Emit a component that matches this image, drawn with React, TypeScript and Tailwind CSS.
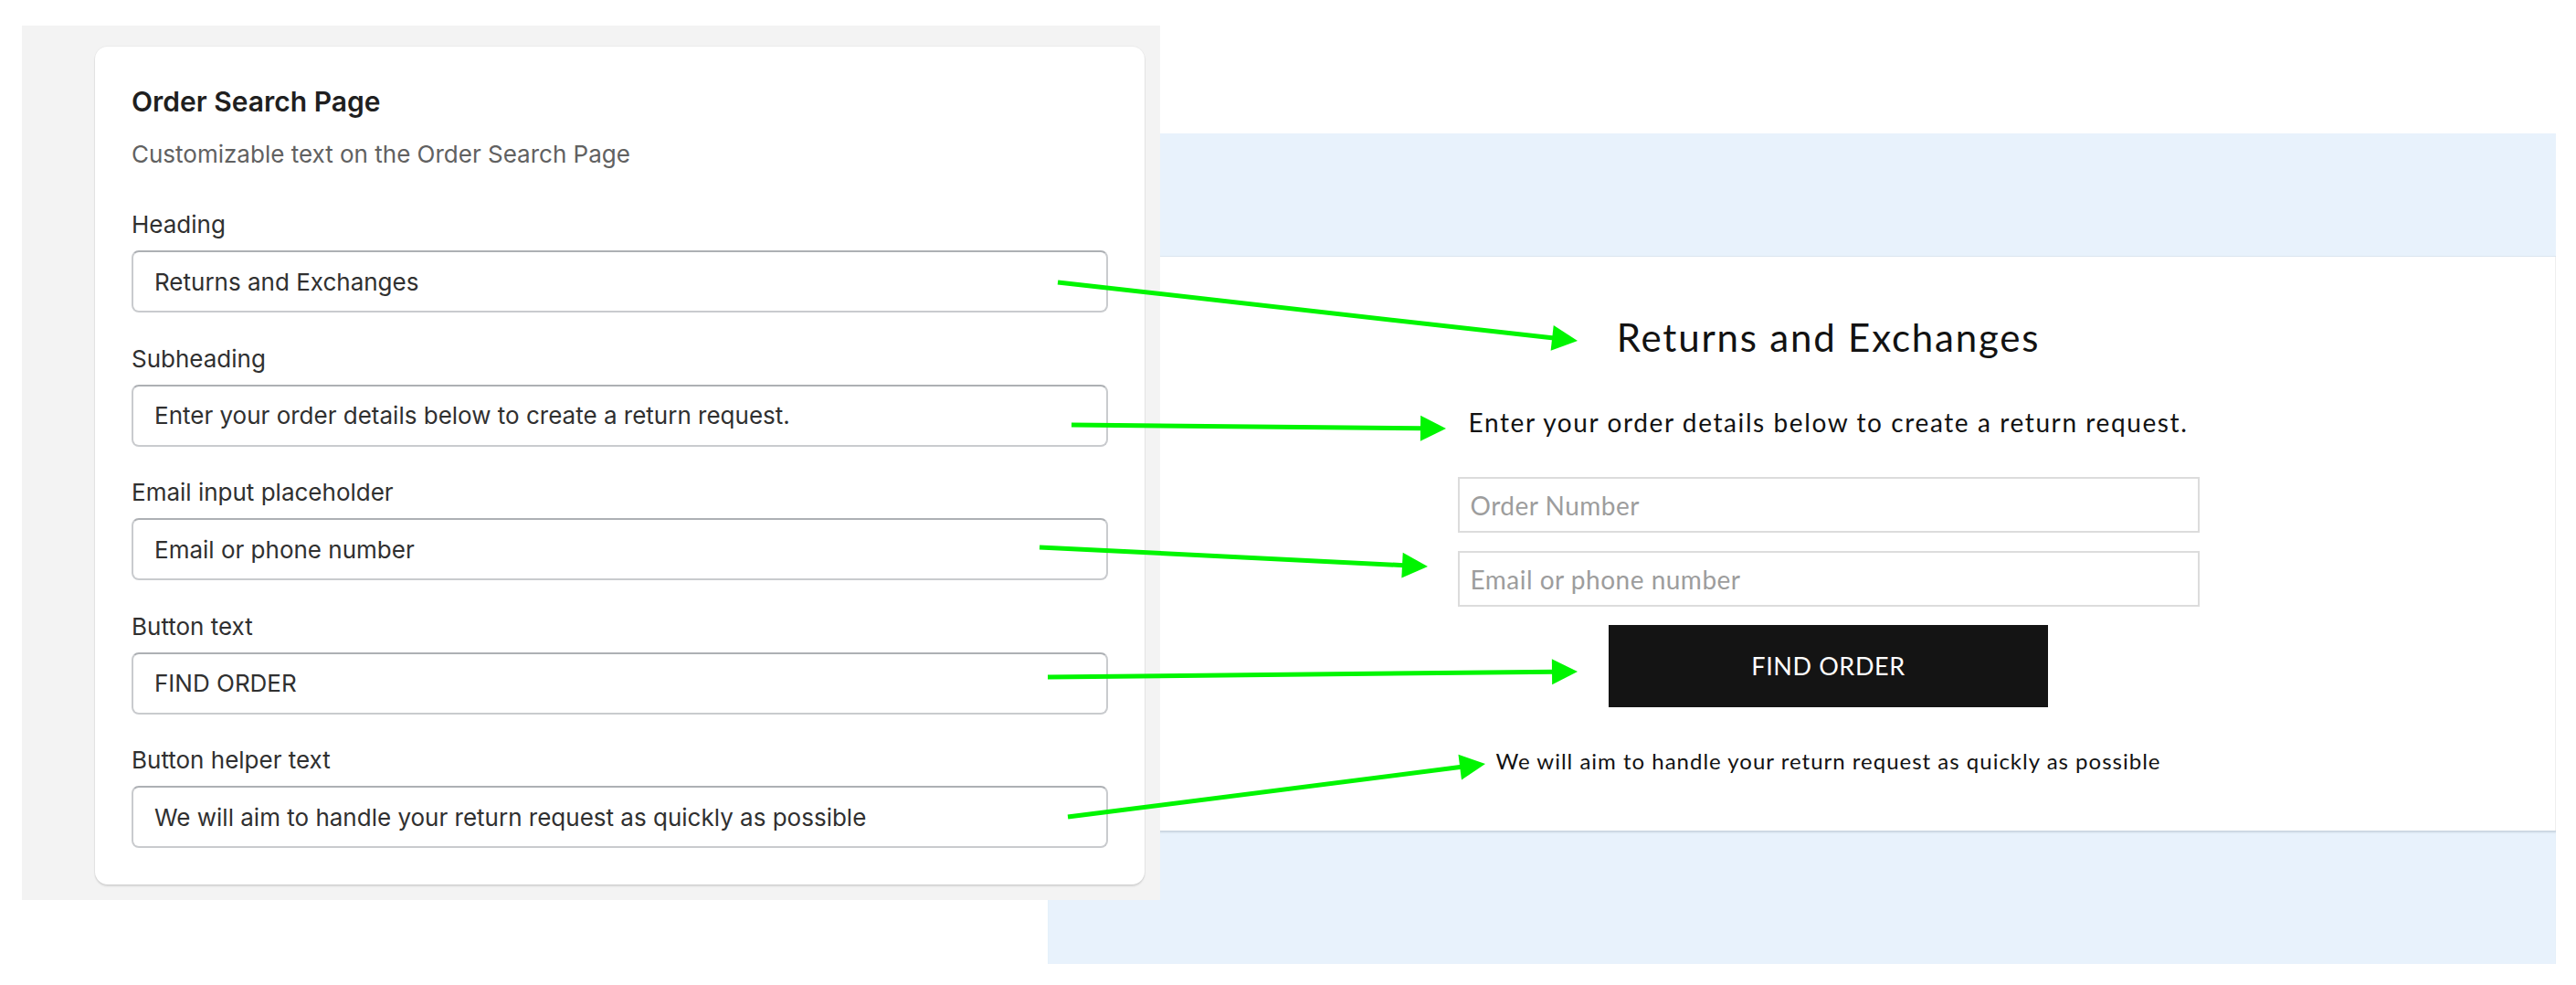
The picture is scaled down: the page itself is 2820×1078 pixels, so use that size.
import React from "react";

const fields = [
  { label: "Heading", value: "Returns and Exchanges" },
  { label: "Subheading", value: "Enter your order details below to create a return request." },
  { label: "Email input placeholder", value: "Email or phone number" },
  { label: "Button text", value: "FIND ORDER" },
  { label: "Button helper text", value: "We will aim to handle your return request as quickly as possible" },
];

// start point (inside settings input) -> arrow tip (next to storefront element)
const arrows: [number, number, number, number][] = [
  [1158, 309, 1727, 373],
  [1173, 465, 1583, 469],
  [1138, 599, 1563, 620],
  [1147, 741, 1727, 735],
  [1169, 894, 1626, 836],
];

const Arrow = ({ a }: { a: [number, number, number, number] }) => {
  const [x1, y1, x2, y2] = a;
  const len = Math.hypot(x2 - x1, y2 - y1);
  const ux = (x2 - x1) / len;
  const uy = (y2 - y1) / len;
  const head = 28;
  const half = 14;
  const bx = x2 - ux * head;
  const by = y2 - uy * head;
  const pts = `${x2},${y2} ${bx - uy * half},${by + ux * half} ${bx + uy * half},${by - ux * half}`;
  return (
    <g>
      <line x1={x1} y1={y1} x2={bx + ux * 2} y2={by + uy * 2} stroke="#00f500" strokeWidth={5} />
      <polygon points={pts} fill="#00f500" />
    </g>
  );
};

const SettingsCard = () => (
  <div className="relative z-10 mt-[28px] ml-[24px] w-[1246px] h-[957px] shrink-0 bg-[#f3f3f3] pl-[80px] pt-[23px]">
    <div
      className="w-[1149px] rounded-[14px] bg-white p-[40px] shadow-[0_2px_2px_rgba(0,0,0,0.12),0_0_0_1px_rgba(0,0,0,0.03)]"
      style={{ fontFamily: "Inter, 'Noto Sans', sans-serif" }}
    >
      <h2 className="text-[30px] leading-[40px] font-semibold text-[#1f1f1f]">Order Search Page</h2>
      <p className="mt-[18px] text-[26px] leading-[40px] text-[#616161]">
        Customizable text on the Order Search Page
      </p>
      <div className="mt-[37px] flex flex-col gap-[30.5px]">
        {fields.map((f) => (
          <div key={f.label} className="flex flex-col gap-[8px]">
            <label className="text-[26px] leading-[40px] text-[#303030]">{f.label}</label>
            <input
              readOnly
              defaultValue={f.value}
              className="h-[68px] w-full rounded-[8px] border-2 border-[#c9cbce] border-t-[#adb0b4] bg-white px-[23px] text-[26px] text-[#303030] outline-none"
            />
          </div>
        ))}
      </div>
    </div>
  </div>
);

const StorefrontPreview = () => (
  <div
    className="-ml-[123px] mt-[146px] flex h-[909px] w-[1651px] shrink-0 flex-col"
    style={{ fontFamily: "Lato, 'Open Sans', sans-serif" }}
  >
    <div className="h-[135px] bg-[#e8f2fc] border-b border-[#dbe5ef]" />
    <div className="flex h-[628px] flex-col items-center bg-white pl-[59px] pt-[63px] border-r border-[#eeeeee]">
      <h1 className="text-[42px] leading-[50px] tracking-[1.8px] text-[#121212]">Returns and Exchanges</h1>
      <p className="mt-[51px] text-[28px] leading-[34px] tracking-[1.6px] text-[#121212]">
        Enter your order details below to create a return request.
      </p>
      <input
        placeholder="Order Number"
        className="mt-[43px] h-[61px] w-[812px] border-2 border-[#dcdcdc] px-[12px] text-[28px] tracking-[0.5px] outline-none placeholder:text-[#9d9d9d]"
      />
      <input
        placeholder="Email or phone number"
        className="mt-[20px] h-[61px] w-[812px] border-2 border-[#dcdcdc] px-[12px] text-[28px] tracking-[0.5px] outline-none placeholder:text-[#9d9d9d]"
      />
      <button className="mt-[20px] h-[90px] w-[481px] bg-[#141414] text-[27px] tracking-[0.6px] text-white">
        FIND ORDER
      </button>
      <p className="mt-[44px] text-[24px] leading-[30px] tracking-[1px] text-[#121212]">
        We will aim to handle your return request as quickly as possible
      </p>
    </div>
    <div className="flex-1 bg-[#e8f2fc] shadow-[inset_0_3px_2px_-1px_rgba(180,192,204,0.6)]" />
  </div>
);

export default function App() {
  return (
    <div className="relative h-[1078px] w-[2820px] overflow-hidden bg-white">
      <div className="flex items-start">
        <SettingsCard />
        <StorefrontPreview />
      </div>
      <svg
        className="pointer-events-none absolute left-0 top-0 z-20"
        width={2820}
        height={1078}
        viewBox="0 0 2820 1078"
      >
        {arrows.map((a, i) => (
          <Arrow key={i} a={a} />
        ))}
      </svg>
    </div>
  );
}
